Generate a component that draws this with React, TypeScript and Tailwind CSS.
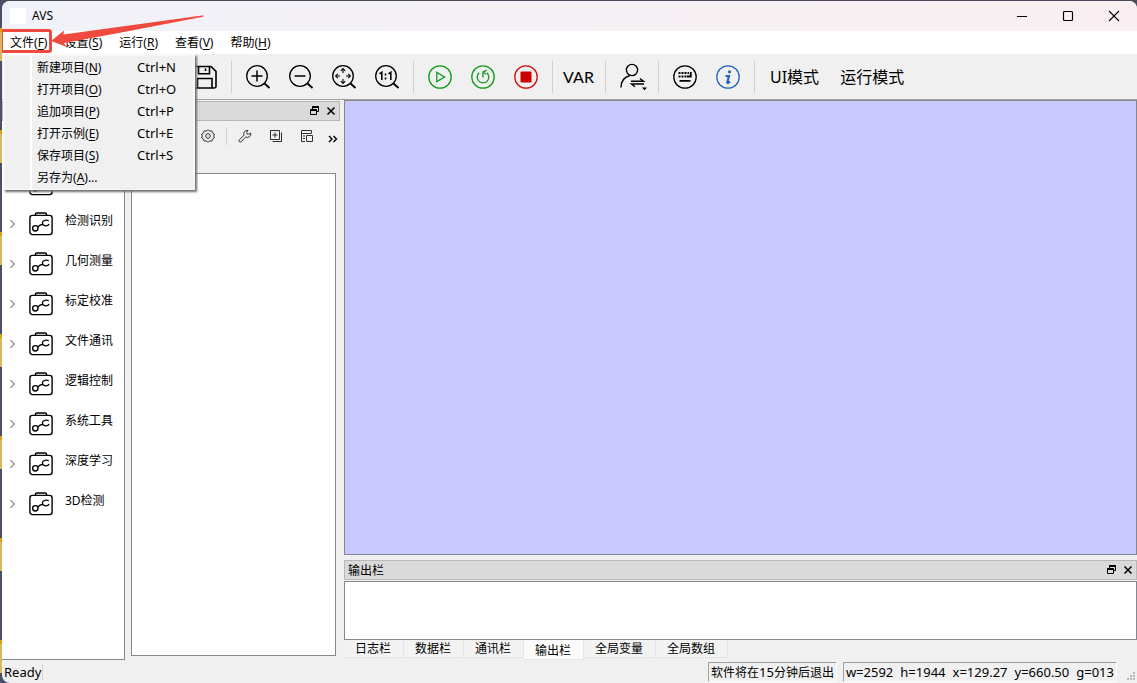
import { useState, type ReactNode } from 'react';
import clsx from 'clsx';

const MENUS = [
  { label: '文件', key: 'F' },
  { label: '设置', key: 'S' },
  { label: '运行', key: 'R' },
  { label: '查看', key: 'V' },
  { label: '帮助', key: 'H' },
];

const FILE_ITEMS = [
  { label: '新建项目', key: 'N', shortcut: 'Ctrl+N' },
  { label: '打开项目', key: 'O', shortcut: 'Ctrl+O' },
  { label: '追加项目', key: 'P', shortcut: 'Ctrl+P' },
  { label: '打开示例', key: 'E', shortcut: 'Ctrl+E' },
  { label: '保存项目', key: 'S', shortcut: 'Ctrl+S' },
  { label: '另存为', key: 'A', suffix: '...' },
];

// the first group is covered by the open menu, only its icon peeks out
const TOOL_GROUPS = ['', '检测识别', '几何测量', '标定校准', '文件通讯', '逻辑控制', '系统工具', '深度学习', '3D检测'];

const TABS = ['日志栏', '数据栏', '通讯栏', '输出栏', '全局变量', '全局数组'];

const READINGS = ['w=2592', 'h=1944', 'x=129.27', 'y=660.50', 'g=013'];

function Mnemonic({ letter }: { letter: string }) {
  return (
    <>
      (<span className="underline underline-offset-2">{letter}</span>)
    </>
  );
}

function Icon({ size = 26, box = 26, width = 1.3, className, children }: { size?: number; box?: number; width?: number; className?: string; children: ReactNode }) {
  return (
    <svg
      width={size}
      height={size}
      viewBox={`0 0 ${box} ${box}`}
      fill="none"
      stroke="currentColor"
      strokeWidth={width}
      className={clsx('shrink-0', className)}
      aria-hidden="true"
    >
      {children}
    </svg>
  );
}

function ToolButton({ label, className, children }: { label: string; className?: string; children: ReactNode }) {
  return (
    <button type="button" aria-label={label} className={clsx('flex h-8 w-[43px] shrink-0 items-center justify-center', className)}>
      {children}
    </button>
  );
}

function Separator() {
  return <div className="mx-1 h-8 w-0.5 shrink-0 border-r border-[#d0d0d0]" />;
}

function Lens({ children }: { children?: ReactNode }) {
  return (
    <Icon>
      <circle cx="12" cy="12" r="10.3" />
      <path d="M19.5 19.5 24.5 24" strokeWidth="1.8" />
      {children}
    </Icon>
  );
}

function DockTitle({ title }: { title?: string }) {
  return (
    <div className="flex h-5 shrink-0 items-center border border-[#b8b8b8] bg-[#dadada] pl-[3px] pr-[3px]">
      <span className="pt-px">{title}</span>
      <div className="ml-auto flex items-center gap-[6px]">
        <button type="button" aria-label="浮动">
          <Icon size={10} box={10} width={1}>
            <path d="M2.5 3V.5h6v5H7M.5 3.5h6v5h-6z" />
            <path d="M2.5 1h6M.5 4h6" strokeWidth="2" />
          </Icon>
        </button>
        <button type="button" aria-label="关闭">
          <Icon size={10} box={10} width={1.5}>
            <path d="m1.5 1.5 7 7m0-7-7 7" />
          </Icon>
        </button>
      </div>
    </div>
  );
}

function ToolboxIcon() {
  return (
    <Icon size={24} box={24} width={1.4}>
      <rect x=".9" y="3.4" width="22.2" height="19.2" rx="2.5" />
      <path d="M6.5 3.2V2.3Q6.5 1 7.8 1h8.4q1.3 0 1.3 1.3v.9" />
      <circle cx="6.3" cy="16.3" r="2.7" />
      <path d="m8.7 15 2.2-1.7q1.2-.9 2.5-.4M19.7 8.6c-2.6-1-5.7-.2-6.2 1.8-.5 2.2 1.5 3.7 4 3.400 1.200-.2 2.100-.8 2.600-1.800" />
    </Icon>
  );
}

function FileMenu() {
  return (
    <div
      role="menu"
      className="absolute left-px top-full z-20 flex w-48 flex-col border-2 border-b border-[#f7f7f7] bg-[#f0f0f0] pt-px shadow-[2px_2px_2px_#707070]"
    >
      <div className="absolute inset-y-0 left-[25px] w-0.5 bg-white" />
      {FILE_ITEMS.map((item) => (
        <button key={item.key} type="button" role="menuitem" className="flex h-[22px] items-center pl-8 text-left">
          <span className="w-[100px]">
            {item.label}
            <Mnemonic letter={item.key} />
            {item.suffix}
          </span>
          <span className="text-[13px]">{item.shortcut}</span>
        </button>
      ))}
    </div>
  );
}

function MenuBar() {
  return (
    <nav className="relative flex h-6 shrink-0 items-center gap-[17px] border-b border-[#f0f0f0] bg-white pl-2">
      {MENUS.map((menu) => (
        <button key={menu.key} type="button">
          {menu.label}
          <Mnemonic letter={menu.key} />
        </button>
      ))}
      <FileMenu />
      {/* highlight box and arrow over the File entry */}
      <div className="absolute -left-0.5 -top-0.5 z-30 h-6 w-[52px] rounded-[3px] border-3 border-[#f04a3e]" />
      <svg className="absolute -top-4 left-12 z-30" width="156" height="34" viewBox="0 0 156 34" aria-hidden="true">
        <path d="M1 26 14 15.5l-.5 4L152 .5q3-.2 1 1.2L66 18.5 14 28l3 4z" fill="#f04a3e" />
      </svg>
    </nav>
  );
}

function Toolbar() {
  return (
    <div className="flex h-[45px] shrink-0 items-center border-b border-[#a0a0a0] pl-[181px]">
      <ToolButton label="保存">
        <Icon width={1.6}>
          <path d="M2 2.5h17l5 4.8v14.7a2 2 0 0 1-2 2H3.5a2 2 0 0 1-2-2z" />
          <path d="M6.5 2.5v7.3h11V2.5M13.5 4.5v2.5M5.5 24v-9.500h14.500V24" />
        </Icon>
      </ToolButton>
      <Separator />
      <ToolButton label="放大">
        <Lens>
          <path d="M12 6.5v11M6.5 12h11" strokeWidth="1.5" />
        </Lens>
      </ToolButton>
      <ToolButton label="缩小">
        <Lens>
          <path d="M6.5 12h11" strokeWidth="1.5" />
        </Lens>
      </ToolButton>
      <ToolButton label="适应窗口">
        <Lens>
          <path d="M12 9V5M12 15v4M9 12H5M15 12h4" strokeWidth="1.1" />
          <path d="m9.8 6.8 2.2-2.2 2.2 2.2M9.8 17.200l2.200 2.200 2.200-2.200M6.800 9.800 4.600 12l2.200 2.200M17.200 9.800l2.200 2.200-2.200 2.200" strokeWidth="1.1" />
        </Lens>
      </ToolButton>
      <ToolButton label="原始大小">
        <Lens>
          <path d="M5.5 9.8 7.8 8.3v7.8M14.5 9.8l2.3-1.5v7.8" strokeWidth="1.6" />
          <path d="M11.5 9.5v2M11.5 13.5v2" strokeWidth="1.6" />
        </Lens>
      </ToolButton>
      <Separator />
      <ToolButton label="运行" className="text-[#129a1e]">
        <Icon>
          <circle cx="13" cy="13" r="11.2" />
          <path d="M9.8 8.5v9l7.8-4.5z" />
        </Icon>
      </ToolButton>
      <ToolButton label="循环运行" className="text-[#129a1e]">
        <Icon>
          <circle cx="13" cy="13" r="11.2" />
          <path d="M9.2 8.700a5.800 5.800 0 1 0 7.600 0M13 13.500V7.800M12.800 7.800l4-1.500M12.800 7.800l3.200 2.500" />
        </Icon>
      </ToolButton>
      <ToolButton label="停止" className="text-[#d90a0a]">
        <Icon>
          <circle cx="13" cy="13" r="11.2" />
          <rect x="7.5" y="7.5" width="11" height="11" rx="1" fill="#cc0000" stroke="none" />
        </Icon>
      </ToolButton>
      <Separator />
      <ToolButton label="VAR" className="font-[family-name:Lato,sans-serif] text-base">
        VAR
      </ToolButton>
      <Separator />
      <ToolButton label="用户切换">
        <Icon size={30} box={30} width={1.4}>
          <circle cx="15" cy="8" r="5.600" />
          <path d="M4 25.500c0-7.200 3.600-10.500 8.500-11.800M14 19.200h12.500l-3.500-2.700M27 22H14.500l3.500 2.700" />
          <path d="M25 25.500h5l-2.500 2.800z" fill="currentColor" stroke="none" />
        </Icon>
      </ToolButton>
      <Separator />
      <ToolButton label="键盘">
        <Icon>
          <circle cx="13" cy="13" r="11.2" />
          <path d="M6.5 9h2M9.5 9h2M12.5 9h2M15.5 9h1.500M6.500 12.500h2M9.500 12.500h2M12.500 12.500h2M15 12.500h3.800V8M7.500 16.800h11" strokeWidth="1.8" />
        </Icon>
      </ToolButton>
      <ToolButton label="关于" className="text-[#2764bd]">
        <Icon>
          <circle cx="13" cy="13" r="11.2" />
          <circle cx="14.5" cy="7.8" r="1.6" fill="currentColor" stroke="none" />
          <path d="M10.500 12h3.500l-1.800 6.500q0 1.200 2.800-.8" strokeWidth="2.2" />
        </Icon>
      </ToolButton>
      <Separator />
      <button type="button" className="ml-px px-[10px] text-base">UI模式</button>
      <button type="button" className="ml-px px-[10px] text-base">运行模式</button>
    </div>
  );
}

function ToolTree() {
  return (
    <aside className="flex w-[123px] shrink-0 flex-col pt-px">
      <DockTitle />
      <ul className="flex-1 border-b border-r border-[#828790] bg-white pt-[43px]">
        {TOOL_GROUPS.map((name) => (
          <li key={name} className="flex h-10 items-center pl-[7px]">
            <Icon size={8} box={8} className="mr-3 text-[#909090]">
              <path d="m1.5 0 3.8 4-3.8 4" />
            </Icon>
            <ToolboxIcon />
            <span className="ml-3 pb-[6px]">{name}</span>
          </li>
        ))}
      </ul>
    </aside>
  );
}

function ProcessDock() {
  return (
    <section className="ml-1 flex w-[211px] shrink-0 flex-col pt-px">
      <DockTitle />
      <div className="flex h-[52px] shrink-0 justify-end pt-[5px] pr-[2px]">
        <div className="flex h-5 items-center text-[#303030]">
          <button type="button" aria-label="设置">
            <Icon size={14} box={14} width={1}>
              <path d="m7 .8 1.700 1.300 2.100-.2.700 2 1.800 1.200L12.700 7l.6 1.900-1.800 1.200-.7 2-2.100-.2L7 13.200l-1.700-1.300-2.100.2-.7-2L.7 8.900 1.300 7 .7 5.100l1.800-1.200.7-2 2.100.2z" />
              <circle cx="7" cy="7" r="2.3" />
            </Icon>
          </button>
          <div className="mx-[11px] h-[18px] border-l border-[#d0d0d0]" />
          <button type="button" aria-label="工具">
            <Icon size={14} box={14} width={1}>
              <path d="M12.700 4.100 10.800 5.200 9 4.900 8.700 3.200 10 1.500a3.400 3.400 0 0 0-4 4.700L1.300 10.900a1.200 1.200 0 0 0 1.800 1.800L7.800 8a3.400 3.400 0 0 0 4.900-3.900z" />
            </Icon>
          </button>
          <button type="button" aria-label="添加" className="ml-[17px]">
            <Icon size={14} box={14} width={1}>
              <path d="M1.5 1.5h9v9h-9zM3.5 12.5h9v-9M6 3.5v5M3.5 6h5" />
            </Icon>
          </button>
          <button type="button" aria-label="列表" className="ml-[17px]">
            <Icon size={14} box={14} width={1}>
              <path d="M5 12.5H1.5v-11h10V4M1.5 4.5h10M3 7h2M3 9.5h2M6.5 6.5h6v6h-6z" />
            </Icon>
          </button>
          <button type="button" aria-label="更多" className="ml-[14px] pt-[6px] text-black">
            <Icon size={10} box={10} width={1.4}>
              <path d="m1 2 3 3-3 3M5.5 2l3 3-3 3" />
            </Icon>
          </button>
        </div>
      </div>
      <div className="ml-0.5 mr-1 mb-1 flex-1 border border-[#828790] bg-white" />
    </section>
  );
}

function OutputDock() {
  const [active, setActive] = useState('输出栏');

  return (
    <div className="mt-[5px] flex h-[100px] shrink-0 flex-col">
      <DockTitle title="输出栏" />
      <output className="mt-px h-[59px] shrink-0 border border-[#828790] bg-white" />
      <div role="tablist" className="flex items-start">
        {TABS.map((tab) => (
          <button
            key={tab}
            type="button"
            role="tab"
            aria-selected={active === tab}
            onClick={() => setActive(tab)}
            className={clsx(
              'border-b border-r border-[#e4e4e4] pl-[11px] pr-3',
              active === tab ? 'h-5 bg-[#fbfbfb] pt-0.5' : 'h-[18px] bg-[#f3f3f3] pt-px',
            )}
          >
            <span className="block leading-4">{tab}</span>
          </button>
        ))}
      </div>
    </div>
  );
}

function StatusBar() {
  return (
    <footer className="flex h-[23px] shrink-0 items-center text-[13px] leading-[18px]">
      <span className="border-r border-[#d8d8d8] pl-0.5 pr-px">Ready</span>
      <span className="ml-auto mr-[6px] border border-[#a0a0a0] border-b-white border-r-white px-0.5">
        <span className="text-xs">软件将在</span>15<span className="text-xs">分钟后退出</span>
      </span>
      <span className="flex gap-[7px] border border-[#a0a0a0] border-b-white border-r-white px-0.5">
        {READINGS.map((reading) => (
          <span key={reading}>{reading}</span>
        ))}
      </span>
      <svg className="ml-2 mt-auto shrink-0" width="12" height="12" fill="#b8b8b8" aria-hidden="true">
        <path d="M8 1h2v2H8zM5 4h2v2H5zM8 4h2v2H8zM2 7h2v2H2zM5 7h2v2H5zM8 7h2v2H8z" />
      </svg>
    </footer>
  );
}

export default function App() {
  return (
    <div className="h-screen overflow-hidden bg-[repeating-linear-gradient(#4b5068_0_28px,#e0a010_28px_32px,#d9b860_32px_61px,#4b5068_61px_102px)] font-['Noto_Sans','Noto_Sans_CJK_SC',sans-serif] text-xs text-black">
      <div className="h-full border-t border-[#4b4b5c] pl-0.5">
        <div className="flex h-full flex-col overflow-hidden rounded-t-lg rounded-bl-lg bg-[#f0f0f0]">
          <header className="flex h-[30px] shrink-0 items-center bg-linear-to-r from-[#f1f2f9] to-[#faeff1] pl-2">
            <div className="size-4 bg-white" />
            <h1 className="ml-[6px]">AVS</h1>
            <div className="ml-auto flex">
              <button type="button" aria-label="最小化" className="flex w-[46px] justify-center">
                <Icon size={12} box={12} width={1}>
                  <path d="M1 6.5h10" />
                </Icon>
              </button>
              <button type="button" aria-label="最大化" className="flex w-[46px] justify-center">
                <Icon size={12} box={12} width={1.2}>
                  <rect x="1.5" y="1.5" width="9" height="9" rx="1" />
                </Icon>
              </button>
              <button type="button" aria-label="关闭" className="flex w-[46px] justify-center">
                <Icon size={12} box={12} width={1.1}>
                  <path d="m1 1 10 10m0-10L1 11" />
                </Icon>
              </button>
            </div>
          </header>
          <MenuBar />
          <Toolbar />
          <div className="flex min-h-0 flex-1">
            <ToolTree />
            <ProcessDock />
            <main className="ml-1 flex min-w-0 flex-1 flex-col">
              <div className="flex-1 border border-[#828790] bg-[#c8c8ff]" />
              <OutputDock />
            </main>
          </div>
          <StatusBar />
        </div>
      </div>
    </div>
  );
}
